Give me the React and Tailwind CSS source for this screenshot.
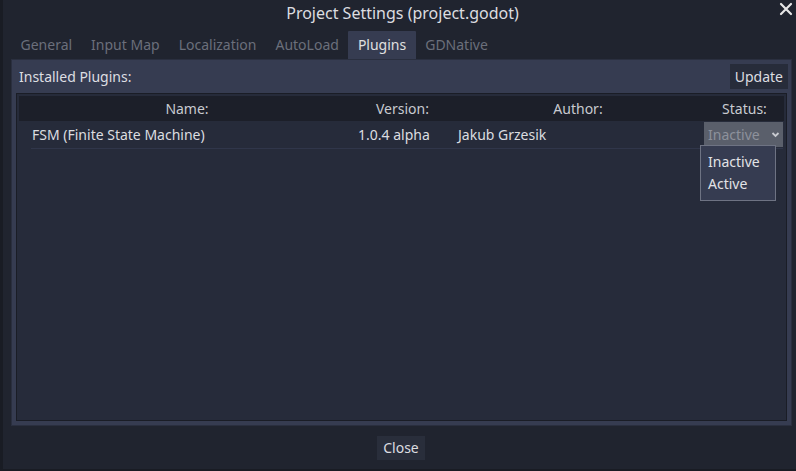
import React from 'react'

const tabs = ['General', 'Input Map', 'Localization', 'AutoLoad', 'Plugins', 'GDNative']

function App() {
  const font = { fontFamily: '"Noto Sans", "DejaVu Sans", sans-serif' }
  return (
    <div
      className="relative w-[796px] h-[471px] bg-[#20242f] border-l-[3px] border-b-[2px] border-[#191c24] flex flex-col text-[#e0e0e0] overflow-hidden"
      style={font}
    >
      {/* title */}
      <div className="h-[25px] flex items-center justify-center text-[16px] text-[#dcdde0] pl-[6px]">
        Project Settings (project.godot)
      </div>
      <div className="absolute right-[3px] top-[2px] text-[#e6e6e6]">
        <svg width="14" height="14" viewBox="0 0 14 14">
          <path d="M2 2 L12 12 M12 2 L2 12" stroke="#e6e6e6" strokeWidth="2.2" strokeLinecap="round" />
        </svg>
      </div>

      {/* tabs */}
      <div className="mt-[6px] h-[28px] flex pl-[8px] text-[14px]">
        {tabs.map((t) => (
          <div
            key={t}
            className={
              t === 'Plugins'
                ? 'px-[9.5px] pb-[2px] flex items-center bg-[#363c51] text-[#e0e0e0] rounded-t-[1px]'
                : 'px-[9.5px] pb-[2px] flex items-center text-[#6b6f7b]'
            }
          >
            {t}
          </div>
        ))}
      </div>

      {/* panel */}
      <div className="ml-[8px] w-[781px] h-[367px] bg-[#363c51] border border-[#2a2f3f] flex flex-col px-[4px]">
        <div className="flex items-center justify-between h-[33px] pl-[3px]">
          <span className="text-[14px] text-[#dddee2]">Installed Plugins:</span>
          <button className="h-[25px] px-[5px] bg-[#272c3a] text-[14px] text-[#dcdde0] -mr-[1px]">
            Update
          </button>
        </div>
        <div className="flex-1 bg-[#262b3a] border border-[#1a1d26] p-[2px] mb-[4px]">
          <div className="grid grid-cols-[336px_95px_256px_77px] h-[25px] bg-[#1c1f29] text-[14px] text-[#c8cad0] items-center">
            <div className="text-center">Name:</div>
            <div className="text-center">Version:</div>
            <div className="text-center">Author:</div>
            <div className="text-center">Status:</div>
          </div>
          <div className="grid grid-cols-[336px_95px_256px_77px] h-[27px] text-[14px] text-[#dcdde0] items-center">
            <div className="pl-[13px]">FSM (Finite State Machine)</div>
            <div className="pl-[3px]">1.0.4 alpha</div>
            <div className="pl-[8px]">Jakub Grzesik</div>
            <div className="-ml-[2px] w-[79px] h-[25px] bg-[#5a5f6b] flex items-center justify-between pl-[4px] pr-[3px] text-[#8d919b]">
              <span>Inactive</span>
              <svg width="9" height="9" viewBox="0 0 9 9">
                <path d="M1.5 3 L4.5 6 L7.5 3" stroke="#c8cad0" strokeWidth="1.8" fill="none" />
              </svg>
            </div>
          </div>
          <div className="ml-[12px] w-[752px] h-[1px] bg-[#30364a]" />
        </div>
      </div>

      {/* footer */}
      <div className="flex-1 flex items-center justify-center pl-[3px]">
        <button className="h-[24px] px-[6px] bg-[#292e3b] text-[14px] text-[#dcdde0]">Close</button>
      </div>

      {/* dropdown popup */}
      <div className="absolute left-[697px] top-[145px] w-[76px] h-[56px] bg-[#363c51] border border-[#6e7383] flex flex-col justify-center pl-[7px] text-[14px] text-[#e2e3e6] leading-[22px]">
        <div>Inactive</div>
        <div>Active</div>
      </div>
    </div>
  )
}

export default App
